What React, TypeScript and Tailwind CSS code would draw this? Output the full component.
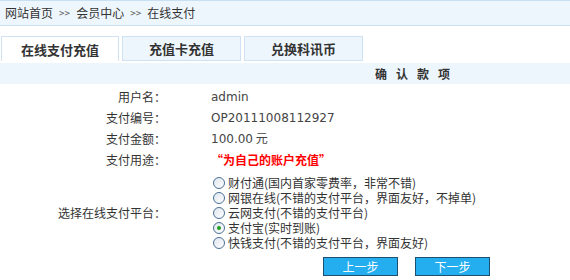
import type { ReactNode } from 'react'

const font = { fontFamily: '"Noto Sans CJK SC", "DejaVu Sans", sans-serif' }

const platforms = [
  { name: '财付通(国内首家零费率，非常不错)', checked: false },
  { name: '网银在线(不错的支付平台，界面友好，不掉单)', checked: false },
  { name: '云网支付(不错的支付平台)', checked: false },
  { name: '支付宝(实时到账)', checked: true },
  { name: '快钱支付(不错的支付平台，界面友好)', checked: false },
]

const Row = ({ label, children }: { label: string; children: ReactNode }) => (
  <div className="flex h-[21px] items-center">
    <div className="w-[166px] text-right text-[#333]">{label}</div>
    <div className="pl-[45px]">{children}</div>
  </div>
)

const Radio = ({ checked }: { checked: boolean }) => (
  <span className="mr-[3px] flex h-[12px] w-[12px] shrink-0 items-center justify-center rounded-full border border-[#4a6f95] bg-gradient-to-br from-[#dfe6ee] to-white">
    {checked && <span className="h-[4px] w-[4px] rounded-full bg-[#21a121]" />}
  </span>
)

export default function App() {
  return (
    <div className="h-[280px] w-[570px] overflow-hidden bg-white text-[12px] leading-none" style={font}>
      {/* 面包屑 */}
      <div className="flex h-[26px] items-center gap-[6px] border-t border-b border-[#c9dff2] bg-[#eef6fd] pl-[5px] text-[#333]">
        <span>网站首页</span>
        <span className="text-[10px] text-[#555]">&gt;&gt;</span>
        <span>会员中心</span>
        <span className="text-[10px] text-[#555]">&gt;&gt;</span>
        <span>在线支付</span>
      </div>

      {/* tabs */}
      <div className="mt-[10px] flex gap-[3px] pl-[1px]">
        <div className="flex h-[25px] w-[118px] items-center justify-center border border-b-0 border-[#cfe2f4] bg-white text-[13px] font-bold text-[#333]">
          在线支付充值
        </div>
        <div className="flex h-[25px] w-[119px] items-center justify-center border border-[#cfe2f4] bg-[#eef6fd] text-[13px] font-bold text-[#333]">
          充值卡充值
        </div>
        <div className="flex h-[25px] w-[119px] items-center justify-center border border-[#cfe2f4] bg-[#eef6fd] text-[13px] font-bold text-[#333]">
          兑换科讯币
        </div>
      </div>

      {/* 确认款项 */}
      <div className="mt-[2px] flex h-[21px] items-center bg-[#eef6fd] pl-[375px] font-bold tracking-[9px] text-[#333]">
        确认款项
      </div>

      <div className="mt-[2px]">
        <Row label="用户名：">
          <span className="text-[#444]" style={{ fontFamily: '"DejaVu Sans", sans-serif' }}>admin</span>
        </Row>
        <Row label="支付编号：">
          <span className="text-[#444]" style={{ fontFamily: '"DejaVu Sans", sans-serif' }}>OP20111008112927</span>
        </Row>
        <Row label="支付金额：">
          <span className="text-[#444]">
            <span style={{ fontFamily: '"DejaVu Sans", sans-serif' }}>100.00</span> 元
          </span>
        </Row>
        <Row label="支付用途：">
          <span className="font-bold text-[#ff0000]">“为自己的账户充值”</span>
        </Row>
      </div>

      <div className="mt-[5px] flex items-center">
        <div className="w-[166px] text-right text-[#333]">选择在线支付平台：</div>
        <div className="pl-[47px]">
          {platforms.map((p) => (
            <div key={p.name} className="flex h-[15px] items-center text-[#333]">
              <Radio checked={p.checked} />
              {p.name}
            </div>
          ))}
        </div>
      </div>

      <div className="mt-[7px] flex gap-[17px] pl-[323px]">
        <button className="flex h-[19px] w-[75px] items-center justify-center border border-[#1d4f6e] bg-[#24aef0] text-white">
          上一步
        </button>
        <button className="flex h-[19px] w-[75px] items-center justify-center border border-[#1d4f6e] bg-[#24aef0] text-white">
          下一步
        </button>
      </div>
    </div>
  )
}
